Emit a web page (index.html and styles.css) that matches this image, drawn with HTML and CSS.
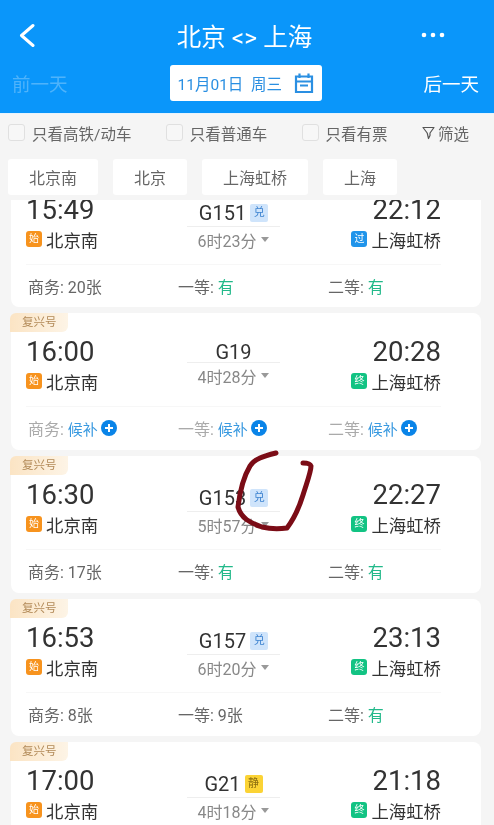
FILE: index.html
```html
<!DOCTYPE html>
<html lang="zh">
<head>
<meta charset="utf-8">
<title>北京 &lt;&gt; 上海</title>
<link rel="stylesheet" href="styles.css">
</head>
<body>
<div class="screen">
  <header class="header">
    <div class="nav">
      <svg class="back" width="18" height="24" viewBox="0 0 18 24"><path d="M15 2.5 L3.5 12.5 L15 22.5" fill="none" stroke="#fff" stroke-width="3" stroke-linecap="round" stroke-linejoin="round"/></svg>
      <div class="title">北京 &lt;&gt; 上海</div>
      <svg class="more" width="24" height="6" viewBox="0 0 24 6"><circle cx="3" cy="3" r="2.3" fill="#fff"/><circle cx="12" cy="3" r="2.3" fill="#fff"/><circle cx="21" cy="3" r="2.3" fill="#fff"/></svg>
    </div>
    <div class="dates">
      <span class="day day--off">前一天</span>
      <div class="date">
        <span>11月01日&nbsp;&nbsp;周三</span>
        <svg width="20" height="22" viewBox="0 0 20 22"><path d="M2 4.5H18V20H2Z M2 9.5H18 M6 13.5H14" fill="none" stroke="#2a8fe2" stroke-width="2.2"/><path d="M5.5 1.5V6 M14.5 1.5V6" stroke="#2a8fe2" stroke-width="2.2"/></svg>
      </div>
      <span class="day">后一天</span>
    </div>
  </header>

  <div class="filters">
    <label class="check"><i class="box"></i>只看高铁/动车</label>
    <label class="check"><i class="box"></i>只看普通车</label>
    <label class="check"><i class="box"></i>只看有票</label>
    <span class="check check--filter"><svg width="13" height="14" viewBox="0 0 13 14"><path d="M1 1.5H12L8 7V9.5L6.5 12.5L5.2 7Z" fill="none" stroke="#555" stroke-width="1.2" stroke-linejoin="round"/></svg>筛选</span>
  </div>

  <div class="chips">
    <span class="chip">北京南</span>
    <span class="chip">北京</span>
    <span class="chip">上海虹桥</span>
    <span class="chip">上海</span>
  </div>

  <main class="list">
    <article class="card card--first">
      <div class="route">
        <div class="end">
          <div class="time">15:49</div>
          <div class="station"><i class="mark mark--start">始</i>北京南</div>
        </div>
        <div class="mid">
          <div class="train train--badged">G151<i class="perk">兑</i></div>
          <div class="dur">6时23分<i class="caret"></i></div>
        </div>
        <div class="end end--right">
          <div class="time">22:12</div>
          <div class="station"><i class="mark mark--pass">过</i>上海虹桥</div>
        </div>
      </div>
      <div class="seats">
        <span>商务: 20张</span>
        <span>一等: <b class="yes">有</b></span>
        <span>二等: <b class="yes">有</b></span>
      </div>
    </article>

    <article class="card">
      <span class="tag">复兴号</span>
      <div class="route">
        <div class="end">
          <div class="time">16:00</div>
          <div class="station"><i class="mark mark--start">始</i>北京南</div>
        </div>
        <div class="mid">
          <div class="train">G19</div>
          <div class="dur">4时28分<i class="caret"></i></div>
        </div>
        <div class="end end--right">
          <div class="time">20:28</div>
          <div class="station"><i class="mark mark--end">终</i>上海虹桥</div>
        </div>
      </div>
      <div class="seats seats--muted">
        <span>商务: <b class="wait">候补</b><i class="plus"></i></span>
        <span>一等: <b class="wait">候补</b><i class="plus"></i></span>
        <span>二等: <b class="wait">候补</b><i class="plus"></i></span>
      </div>
    </article>

    <article class="card">
      <span class="tag">复兴号</span>
      <div class="route">
        <div class="end">
          <div class="time">16:30</div>
          <div class="station"><i class="mark mark--start">始</i>北京南</div>
        </div>
        <div class="mid">
          <div class="train train--badged">G153<i class="perk">兑</i></div>
          <div class="dur">5时57分<i class="caret"></i></div>
        </div>
        <div class="end end--right">
          <div class="time">22:27</div>
          <div class="station"><i class="mark mark--end">终</i>上海虹桥</div>
        </div>
      </div>
      <div class="seats">
        <span>商务: 17张</span>
        <span>一等: <b class="yes">有</b></span>
        <span>二等: <b class="yes">有</b></span>
      </div>
    </article>

    <article class="card">
      <span class="tag">复兴号</span>
      <div class="route">
        <div class="end">
          <div class="time">16:53</div>
          <div class="station"><i class="mark mark--start">始</i>北京南</div>
        </div>
        <div class="mid">
          <div class="train train--badged">G157<i class="perk">兑</i></div>
          <div class="dur">6时20分<i class="caret"></i></div>
        </div>
        <div class="end end--right">
          <div class="time">23:13</div>
          <div class="station"><i class="mark mark--end">终</i>上海虹桥</div>
        </div>
      </div>
      <div class="seats">
        <span>商务: 8张</span>
        <span>一等: 9张</span>
        <span>二等: <b class="yes">有</b></span>
      </div>
    </article>

    <article class="card">
      <span class="tag">复兴号</span>
      <div class="route">
        <div class="end">
          <div class="time">17:00</div>
          <div class="station"><i class="mark mark--start">始</i>北京南</div>
        </div>
        <div class="mid">
          <div class="train train--badged">G21<i class="perk perk--quiet">静</i></div>
          <div class="dur">4时18分<i class="caret"></i></div>
        </div>
        <div class="end end--right">
          <div class="time">21:18</div>
          <div class="station"><i class="mark mark--end">终</i>上海虹桥</div>
        </div>
      </div>
    </article>
  </main>

  <svg class="scribble" width="494" height="825" viewBox="0 0 494 825"><path d="M276 453 C264 456 254 459 250 466 C244 476 240 490 238 507 C241 518 250 523 262 527 C270 529 280 529 287 528 C293 520 299 508 303 495 C307 482 311 472 311 466 C310 463 306 463 303 463" fill="none" stroke="#7b0c16" stroke-width="5" stroke-linecap="round" stroke-linejoin="round"/></svg>
</div>
</body>
</html>
```

FILE: styles.css
```css
* { box-sizing: border-box; }
html, body { margin: 0; padding: 0; }
body { background: #f5f5f5; font-family: Roboto, "Noto Sans CJK SC", sans-serif; color: #333; }
i { font-style: normal; }
b { font-weight: 400; }

.screen { position: relative; width: 494px; height: 825px; overflow: hidden; display: flex; flex-direction: column; background: #f5f5f5; filter: blur(0.6px); }

.header { flex: none; height: 114px; background: #0a96fa; border-bottom: 1px solid #e6f3fd; color: #fff; }
.nav { height: 65px; padding: 5px 49px 0 18px; display: flex; align-items: center; justify-content: space-between; }
.title { font-size: 24.5px; color: #fff; margin-left: 32px; }
.dates { height: 36px; padding: 0 15px 0 12px; display: flex; align-items: center; justify-content: space-between; }
.day { font-size: 18.5px; color: #fff; }
.day--off { color: rgba(255,255,255,0.28); }
.date { width: 152px; height: 36px; background: #fff; border-radius: 3px; display: flex; align-items: center; justify-content: space-between; padding: 0 8px; font-size: 15.5px; color: #2a8fe2; white-space: nowrap; }

.filters { flex: none; height: 36px; padding: 1px 25px 0 8px; display: flex; align-items: center; justify-content: space-between; font-size: 15.5px; color: #666; }
.check { display: flex; align-items: center; gap: 7px; }
.check--filter { gap: 3px; }
.box { flex: none; width: 17px; height: 17px; background: #f7f7f7; border: 1px solid #e0e0e0; border-radius: 3px; }

.chips { flex: none; height: 50px; padding: 9px 8px 5px; display: flex; gap: 15px; }
.chip { height: 36px; padding: 0 21px; background: #fff; border-radius: 3px; display: flex; align-items: center; font-size: 16px; color: #666; }

.list { flex: 1; min-height: 0; overflow: hidden; padding: 0 13px 0 11px; display: flex; flex-direction: column; gap: 6px; }
.card { position: relative; flex: none; height: 137px; padding: 29px 15px 0; background: #fff; border-radius: 8px; }
.card--first { height: 136px; margin-top: -29px; }
.tag { position: absolute; left: -1px; top: 0; width: 58px; height: 19px; padding-left: 12px; background: linear-gradient(90deg, #fbe4c4, #fdf4e6); border-radius: 6px 0 6px 0; font-size: 11.5px; line-height: 19px; color: #b28a58; }

.route { display: grid; grid-template-columns: 161px 93px 1fr; width: 415px; height: 65px; border-bottom: 1px solid #f7f7f7; }
.end { display: flex; flex-direction: column; }
.end--right { align-items: flex-end; }
.time { height: 20px; line-height: 20px; font-size: 27.5px; color: #333; }
.station { margin-top: 7px; height: 24px; display: flex; align-items: center; gap: 4px; font-size: 17.4px; color: #333; }
.mark { flex: none; width: 16px; height: 16px; border-radius: 3px; color: #fff; font-size: 10px; line-height: 16px; text-align: center; }
.mark--start { background: #f7931e; }
.mark--end { background: #12c383; }
.mark--pass { background: #2094ea; }

.mid { display: flex; flex-direction: column; align-items: center; padding-top: 1px; }
.train { align-self: stretch; height: 20px; border-bottom: 1px solid #eee; display: flex; justify-content: center; font-size: 20px; line-height: 18px; color: #333; }
.train--badged { height: 26px; gap: 4px; line-height: 24px; }
.perk { flex: none; width: 18px; height: 18px; margin-top: 3px; background: #cfe4fb; border-radius: 2px; font-size: 11px; line-height: 18px; text-align: center; color: #3d83d0; }
.perk--quiet { background: #fbd335; color: #8a6d10; }
.dur { height: 25px; display: flex; align-items: center; gap: 5px; font-size: 16px; color: #888; }
.caret { flex: none; width: 0; height: 0; border-left: 4.5px solid transparent; border-right: 4.5px solid transparent; border-top: 5px solid #999; }

.seats { display: grid; grid-template-columns: repeat(3, 150px); height: 42px; padding-left: 2px; align-items: center; font-size: 16px; color: #666; }
.seats span { display: flex; align-items: center; white-space: pre; }
.seats--muted { color: #aaa; }
.yes { color: #22b98a; }
.wait { color: #3a9ae0; font-size: 15px; }
.plus { position: relative; flex: none; width: 16px; height: 16px; margin-left: 3px; border-radius: 50%; background: #0a84e8; }
.plus::before { content: ""; position: absolute; left: 4px; top: 7px; width: 8px; height: 2px; background: #fff; }
.plus::after { content: ""; position: absolute; left: 7px; top: 4px; width: 2px; height: 8px; background: #fff; }

.scribble { position: absolute; left: 0; top: 0; pointer-events: none; }
```
